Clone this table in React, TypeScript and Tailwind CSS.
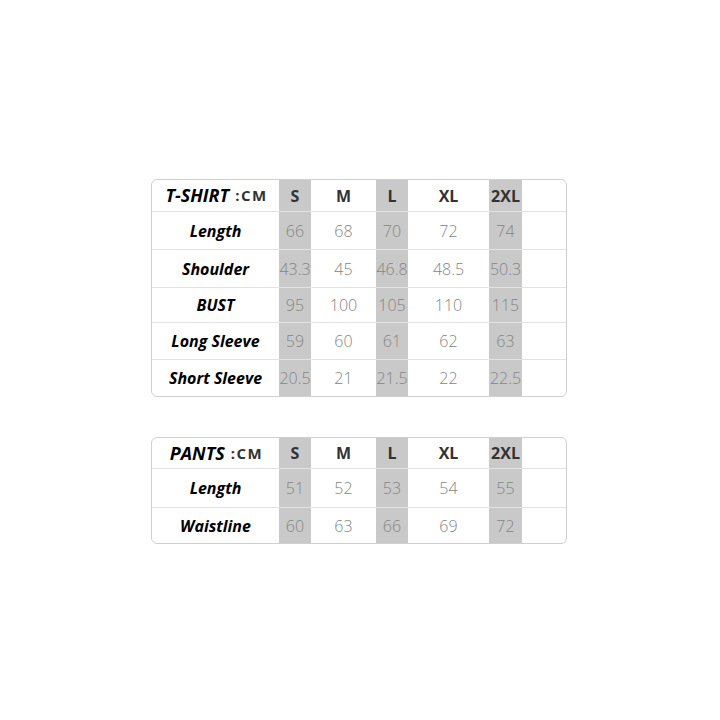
const sizes = ["S", "M", "L", "XL", "2XL"];
const grey = [true, false, true, false, true];

type Row = { label: string; values: string[]; h: string };

const shirtRows: Row[] = [
  { label: "Length", values: ["66", "68", "70", "72", "74"], h: "h-[38px]" },
  { label: "Shoulder", values: ["43.3", "45", "46.8", "48.5", "50.3"], h: "h-[38px]" },
  { label: "BUST", values: ["95", "100", "105", "110", "115"], h: "h-[35px]" },
  { label: "Long Sleeve", values: ["59", "60", "61", "62", "63"], h: "h-[37px]" },
  { label: "Short Sleeve", values: ["20.5", "21", "21.5", "22", "22.5"], h: "h-[36px]" },
];

const pantsRows: Row[] = [
  { label: "Length", values: ["51", "52", "53", "54", "55"], h: "h-[39px]" },
  { label: "Waistline", values: ["60", "63", "66", "69", "72"], h: "h-[35px]" },
];

const gridCols = "grid grid-cols-[127px_32px_65px_32px_81px_33px_1fr]";

const SizeTable = ({ title, rows, headH }: { title: string; rows: Row[]; headH: string }) => {
  return (
    <div className="w-[416px] rounded-[6px] border border-[#cfcfcf] overflow-hidden bg-white">
      <div className={`${gridCols} ${headH} border-b border-[#e2e2e2]`}>
        <div className="flex items-center justify-center gap-[6px] pl-[2px]">
          <span className="text-[18px] font-bold italic text-black">{title}</span>
          <span className="text-[15px] font-bold text-[#333] tracking-[1.5px]">:CM</span>
        </div>
        {sizes.map((s, i) => (
          <div
            key={s}
            className={`flex items-center justify-center text-[16px] font-bold text-[#333] ${grey[i] ? "bg-[#c9c9c9]" : ""}`}
          >
            {s}
          </div>
        ))}
        <div />
      </div>
      {rows.map((r, ri) => (
        <div
          key={r.label}
          className={`${gridCols} ${r.h} ${ri < rows.length - 1 ? "border-b border-[#e2e2e2]" : ""}`}
        >
          <div className="flex items-center justify-center text-[16px] font-bold italic text-black">
            {r.label}
          </div>
          {r.values.map((v, i) => (
            <div
              key={i}
              className={`flex items-center justify-center text-[16px] font-light text-[#858585] ${grey[i] ? "bg-[#c9c9c9]" : ""}`}
            >
              {v}
            </div>
          ))}
          <div />
        </div>
      ))}
    </div>
  );
};

const App = () => {
  return (
    <div className="w-[720px] h-[720px] bg-white flex flex-col items-start pl-[151px] pt-[179px] gap-[40px] font-['Open_Sans','Noto_Sans',sans-serif]">
      <SizeTable title="T-SHIRT" rows={shirtRows} headH="h-[32px]" />
      <SizeTable title="PANTS" rows={pantsRows} headH="h-[31px]" />
    </div>
  );
};

export default App;
